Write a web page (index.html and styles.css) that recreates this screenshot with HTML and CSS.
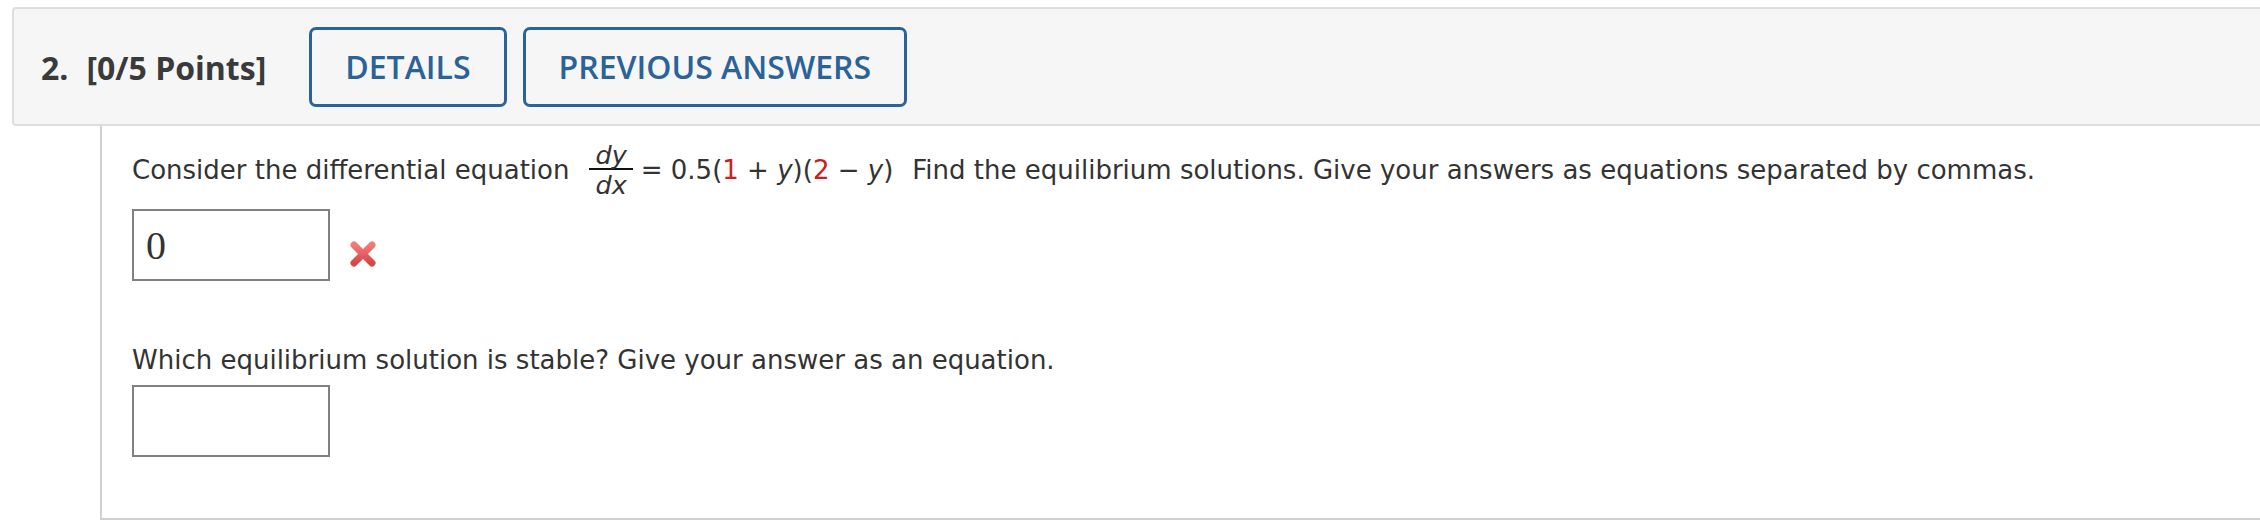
FILE: index.html
```html
<!DOCTYPE html>
<html lang="en">
<head>
<meta charset="utf-8">
<title>Question 2</title>
<link rel="stylesheet" href="styles.css">
</head>
<body>
<div class="page">
  <div class="qhead">
    <span class="qnum">2.</span>
    <span class="qpts">[0/5 Points]</span>
    <button class="btn btn-first" type="button">DETAILS</button>
    <button class="btn" type="button">PREVIOUS ANSWERS</button>
  </div>
  <div class="qbody">
    <div class="line1">
      <span>Consider the differential equation</span>
      <span class="frac"><span class="num">dy</span><span class="den">dx</span></span>
      <span>= 0.5(<span class="red">1</span> + <i>y</i>)(<span class="red">2</span> − <i>y</i>)</span>
      <span class="rest">Find the equilibrium solutions. Give your answers as equations separated by commas.</span>
    </div>
    <div class="ansrow">
      <input class="answer" type="text" value="0" readonly>
      <svg class="xmark" width="30" height="30" viewBox="0 0 30 30" aria-label="incorrect">
        <defs>
          <linearGradient id="xg" x1="0" y1="0" x2="0" y2="1">
            <stop offset="0" stop-color="#f07b7b"/>
            <stop offset="1" stop-color="#d84646"/>
          </linearGradient>
        </defs>
        <path d="M6 6 L24 24 M24 6 L6 24" stroke="url(#xg)" stroke-width="7" stroke-linecap="round" fill="none"/>
      </svg>
    </div>
    <p class="q2">Which equilibrium solution is stable? Give your answer as an equation.</p>
    <input class="answer answer2" type="text" value="" readonly>
  </div>
</div>
</body>
</html>
```
FILE: styles.css
```css
html, body {
  margin: 0;
  padding: 0;
  background: #ffffff;
  overflow: hidden;
}

.page {
  padding: 7px 0 0 12px;
  width: 2300px;
  color: #333333;
}

.qhead {
  display: flex;
  align-items: center;
  background: #f6f6f6;
  border: 2px solid #dedede;
  border-radius: 4px;
  padding: 18px 0 17px 27px;
  font-family: "Open Sans", "Noto Sans", sans-serif;
  font-size: 32px;
  font-weight: 700;
  color: #3a3a3a;
}

.qpts {
  margin-left: 18px;
}

.btn {
  font-family: "Open Sans", "Noto Sans", sans-serif;
  font-size: 32px;
  font-weight: 600;
  color: #2b6297;
  background: #f6f6f6;
  border: 3px solid #2b6297;
  border-radius: 7px;
  height: 80px;
  line-height: 74px;
  padding: 0 33px;
  margin: 0 0 0 16px;
  box-sizing: border-box;
}

.btn-first {
  margin-left: 43px;
}

.qbody {
  margin-left: 88px;
  border-left: 2px solid #d0d0d0;
  border-bottom: 2px solid #d0d0d0;
  padding: 16px 0 61px 30px;
  font-family: "DejaVu Sans", Verdana, sans-serif;
  font-size: 26px;
  color: #333333;
}

.line1 {
  display: flex;
  align-items: center;
  white-space: pre;
}

.frac {
  display: flex;
  flex-direction: column;
  align-items: stretch;
  margin: 0 8px 0 20px;
  font-style: italic;
  font-size: 25.5px;
  text-align: center;
}

.num {
  line-height: 26px;
  padding: 0 6px;
  border-bottom: 2px solid #111111;
}

.den {
  line-height: 26px;
  padding: 2px 6px 0;
}

.line1 i {
  font-style: italic;
}

.red {
  color: #c9211e;
}

.rest {
  margin-left: 19px;
}

.ansrow {
  display: flex;
  align-items: center;
  margin-top: 11px;
}

.answer {
  display: block;
  box-sizing: border-box;
  width: 198px;
  height: 72px;
  margin: 0;
  border: 2px solid #808080;
  padding: 0 0 0 12px;
  font-family: "Liberation Serif", "Times New Roman", serif;
  font-size: 40px;
  color: #333333;
  background: #ffffff;
  outline: none;
}

.xmark {
  margin: 18px 0 0 18px;
}

.q2 {
  margin: 64px 0 10px;
  line-height: 30px;
}
```
